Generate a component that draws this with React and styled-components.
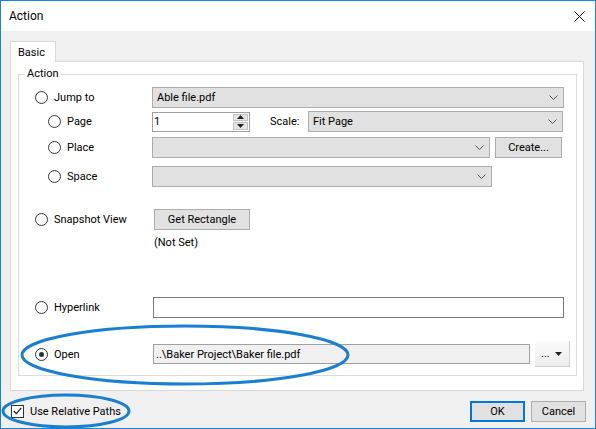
import React from "react";
import styled, { createGlobalStyle } from "styled-components";

const GlobalStyle = createGlobalStyle`
  body {
    margin: 0;
    font-family: Roboto, "Noto Sans", sans-serif;
    font-size: 11px;
    color: #000;
  }
  * { box-sizing: border-box; }
`;

const Window = styled.div`
  position: relative;
  width: 596px;
  height: 429px;
  border: 1px solid #1883d7;
  background: #f0f0f0;
  display: flex;
  flex-direction: column;
`;
const TitleBar = styled.div`
  height: 30px;
  background: #fff;
  display: flex;
  align-items: center;
  justify-content: space-between;
  padding: 0 10px 0 8px;
`;
const Title = styled.span`
  font-size: 12px;
`;
const Body = styled.div`
  flex: 1;
  display: flex;
  flex-direction: column;
  padding: 10px 11px 0 9px;
`;
const TabStrip = styled.div`
  height: 20px;
  display: flex;
`;
const Tab = styled.div`
  width: 46px;
  height: 21px;
  padding-left: 7px;
  display: flex;
  align-items: center;
  background: #fff;
  border: 1px solid #d9d9d9;
  border-bottom: none;
  position: relative;
  z-index: 1;
`;
const Panel = styled.div`
  height: 330px;
  background: #fff;
  border: 1px solid #d9d9d9;
  padding: 4px 6px 14px 7px;
  display: flex;
  flex-direction: column;
`;
const GroupBox = styled.fieldset`
  flex: 1;
  margin: 0;
  padding: 0 0 8px 0;
  min-width: 0;
  border: 1px solid #dcdcdc;
`;
const Legend = styled.legend`
  margin-left: 6px;
  padding: 0 2px;
  line-height: 16px;
`;
const Row = styled.div`
  display: flex;
  align-items: center;
  height: ${(p) => p.$h || 21}px;
  margin-top: ${(p) => p.$mt || 0}px;
`;
const LabelCell = styled.label`
  width: 133px;
  flex-shrink: 0;
  display: flex;
  align-items: center;
  gap: 6px;
  padding-left: ${(p) => (p.$sub ? 29 : 16)}px;
`;
const Radio = styled.span`
  width: 13px;
  height: 13px;
  border-radius: 50%;
  border: 1px solid #333;
  background: #fff;
  display: flex;
  align-items: center;
  justify-content: center;
  &::after {
    content: "";
    width: 5px;
    height: 5px;
    border-radius: 50%;
    background: #333;
    display: ${(p) => (p.$checked ? "block" : "none")};
  }
`;
const Combo = styled.div`
  width: ${(p) => p.$w}px;
  height: 21px;
  background: #e1e1e1;
  border: 1px solid #adadad;
  display: flex;
  align-items: center;
  justify-content: space-between;
  padding: 0 5px 0 4px;
  margin-left: ${(p) => p.$ml || 0}px;
`;
const TextBox = styled.div`
  width: ${(p) => p.$w}px;
  height: ${(p) => p.$h || 21}px;
  background: ${(p) => (p.$readOnly ? "#f0f0f0" : "#fff")};
  border: 1px solid ${(p) => (p.$readOnly ? "#a0a0a0" : "#7a7a7a")};
  margin-left: ${(p) => p.$ml || 0}px;
  display: flex;
  align-items: center;
  padding-left: 2px;
  white-space: nowrap;
  overflow: hidden;
`;
const Spin = styled.div`
  width: 98px;
  height: 20px;
  background: #fff;
  border: 1px solid #a0a0a0;
  display: flex;
  align-items: stretch;
`;
const SpinText = styled.div`
  flex: 1;
  display: flex;
  align-items: center;
  padding-left: 1px;
`;
const SpinButtons = styled.div`
  width: 15px;
  margin: 1px;
  display: flex;
  flex-direction: column;
  gap: 1px;
`;
const SpinButton = styled.div`
  flex: 1;
  background: #e5e5e5;
  border: 1px solid #c4c4c4;
  display: flex;
  align-items: center;
  justify-content: center;
`;
const FieldLabel = styled.span`
  width: ${(p) => p.$w}px;
  margin-left: ${(p) => p.$ml || 0}px;
  flex-shrink: 0;
`;
const Button = styled.div`
  width: ${(p) => p.$w}px;
  height: 21px;
  margin-left: ${(p) => p.$ml || 0}px;
  background: #e1e1e1;
  border: ${(p) => (p.$default ? "2px solid #0078d7" : "1px solid #adadad")};
  display: flex;
  align-items: center;
  justify-content: center;
`;
const MenuButton = styled.div`
  width: 35px;
  height: 26px;
  margin-left: 5px;
  background: linear-gradient(#fbfbfb, #ededed);
  border-right: 1px solid #cfcfcf;
  border-bottom: 1px solid #cfcfcf;
  display: flex;
  align-items: center;
  justify-content: space-between;
  padding: 0 7px 0 6px;
  font-size: 11px;
`;
const Note = styled.div`
  margin: 5px 0 0 135px;
  line-height: 16px;
`;
const Footer = styled.div`
  flex: 1;
  display: flex;
  align-items: center;
  padding: 3px 0 0 1px;
  margin-right: -2px;
`;
const CheckLabel = styled.label`
  display: flex;
  align-items: center;
  gap: 6px;
  flex: 1;
`;
const CheckBox = styled.span`
  width: 13px;
  height: 13px;
  border: 1px solid #333;
  background: #fff;
  display: flex;
  align-items: center;
  justify-content: center;
`;
const Buttons = styled.div`
  display: flex;
  gap: 6px;
`;
const Overlay = styled.svg`
  position: absolute;
  left: -1px;
  top: -1px;
  pointer-events: none;
`;

const Chevron = () => (
  <svg width="9" height="5" viewBox="0 0 9 5">
    <path d="M0.5 0.5 L4.5 4.5 L8.5 0.5" fill="none" stroke="#555" strokeWidth="1" />
  </svg>
);

const Tri = ({ down }) => (
  <svg width="7" height="4" viewBox="0 0 7 4">
    <path d={down ? "M0 0 H7 L3.5 4 Z" : "M0 4 H7 L3.5 0 Z"} fill="#222" />
  </svg>
);

const Option = ({ label, sub, checked }) => (
  <LabelCell $sub={sub}>
    <Radio $checked={checked} />
    {label}
  </LabelCell>
);

const App = () => {
  return (
    <>
      <GlobalStyle />
      <Window>
        <TitleBar>
          <Title>Action</Title>
          <svg width="11" height="11" viewBox="0 0 11 11">
            <path d="M0.5 0.5 L10.5 10.5 M10.5 0.5 L0.5 10.5" stroke="#111" strokeWidth="1" />
          </svg>
        </TitleBar>
        <Body>
          <TabStrip>
            <Tab>Basic</Tab>
          </TabStrip>
          <Panel>
            <GroupBox>
              <Legend>Action</Legend>
              <Row $mt={5}>
                <Option label="Jump to" />
                <Combo $w={412}>
                  Able file.pdf
                  <Chevron />
                </Combo>
              </Row>
              <Row $mt={3}>
                <Option label="Page" sub />
                <Spin>
                  <SpinText>1</SpinText>
                  <SpinButtons>
                    <SpinButton>
                      <Tri />
                    </SpinButton>
                    <SpinButton>
                      <Tri down />
                    </SpinButton>
                  </SpinButtons>
                </Spin>
                <FieldLabel $ml={20} $w={38}>
                  Scale:
                </FieldLabel>
                <Combo $w={255}>
                  Fit Page
                  <Chevron />
                </Combo>
              </Row>
              <Row $mt={5}>
                <Option label="Place" sub />
                <Combo $w={338}>
                  <span />
                  <Chevron />
                </Combo>
                <Button $w={67} $ml={5}>
                  Create...
                </Button>
              </Row>
              <Row $mt={8}>
                <Option label="Space" sub />
                <Combo $w={340}>
                  <span />
                  <Chevron />
                </Combo>
              </Row>
              <Row $mt={22}>
                <Option label="Snapshot View" />
                <Button $w={96} $ml={2}>
                  Get Rectangle
                </Button>
              </Row>
              <Note>(Not Set)</Note>
              <Row $mt={46}>
                <Option label="Hyperlink" />
                <TextBox $w={411} $ml={1} />
              </Row>
              <Row $mt={23} $h={26}>
                <Option label="Open" checked />
                <TextBox $w={377} $h={20} $ml={1} $readOnly>
                  ..\Baker Project\Baker file.pdf
                </TextBox>
                <MenuButton>
                  <span>...</span>
                  <Tri down />
                </MenuButton>
              </Row>
            </GroupBox>
          </Panel>
          <Footer>
            <CheckLabel>
              <CheckBox>
                <svg width="9" height="8" viewBox="0 0 9 8">
                  <path d="M0.8 4 L3.3 6.6 L8.3 0.8" fill="none" stroke="#222" strokeWidth="1.3" />
                </svg>
              </CheckBox>
              Use Relative Paths
            </CheckLabel>
            <Buttons>
              <Button $w={55} $default>
                OK
              </Button>
              <Button $w={55}>Cancel</Button>
            </Buttons>
          </Footer>
        </Body>
        <Overlay width="596" height="429" viewBox="0 0 596 429">
          <ellipse cx="185" cy="355" rx="163" ry="29" fill="none" stroke="#1a7fd1" strokeWidth="3" />
          <ellipse cx="66" cy="411" rx="63" ry="16" fill="none" stroke="#1a7fd1" strokeWidth="3" />
        </Overlay>
      </Window>
    </>
  );
};

export default App;
